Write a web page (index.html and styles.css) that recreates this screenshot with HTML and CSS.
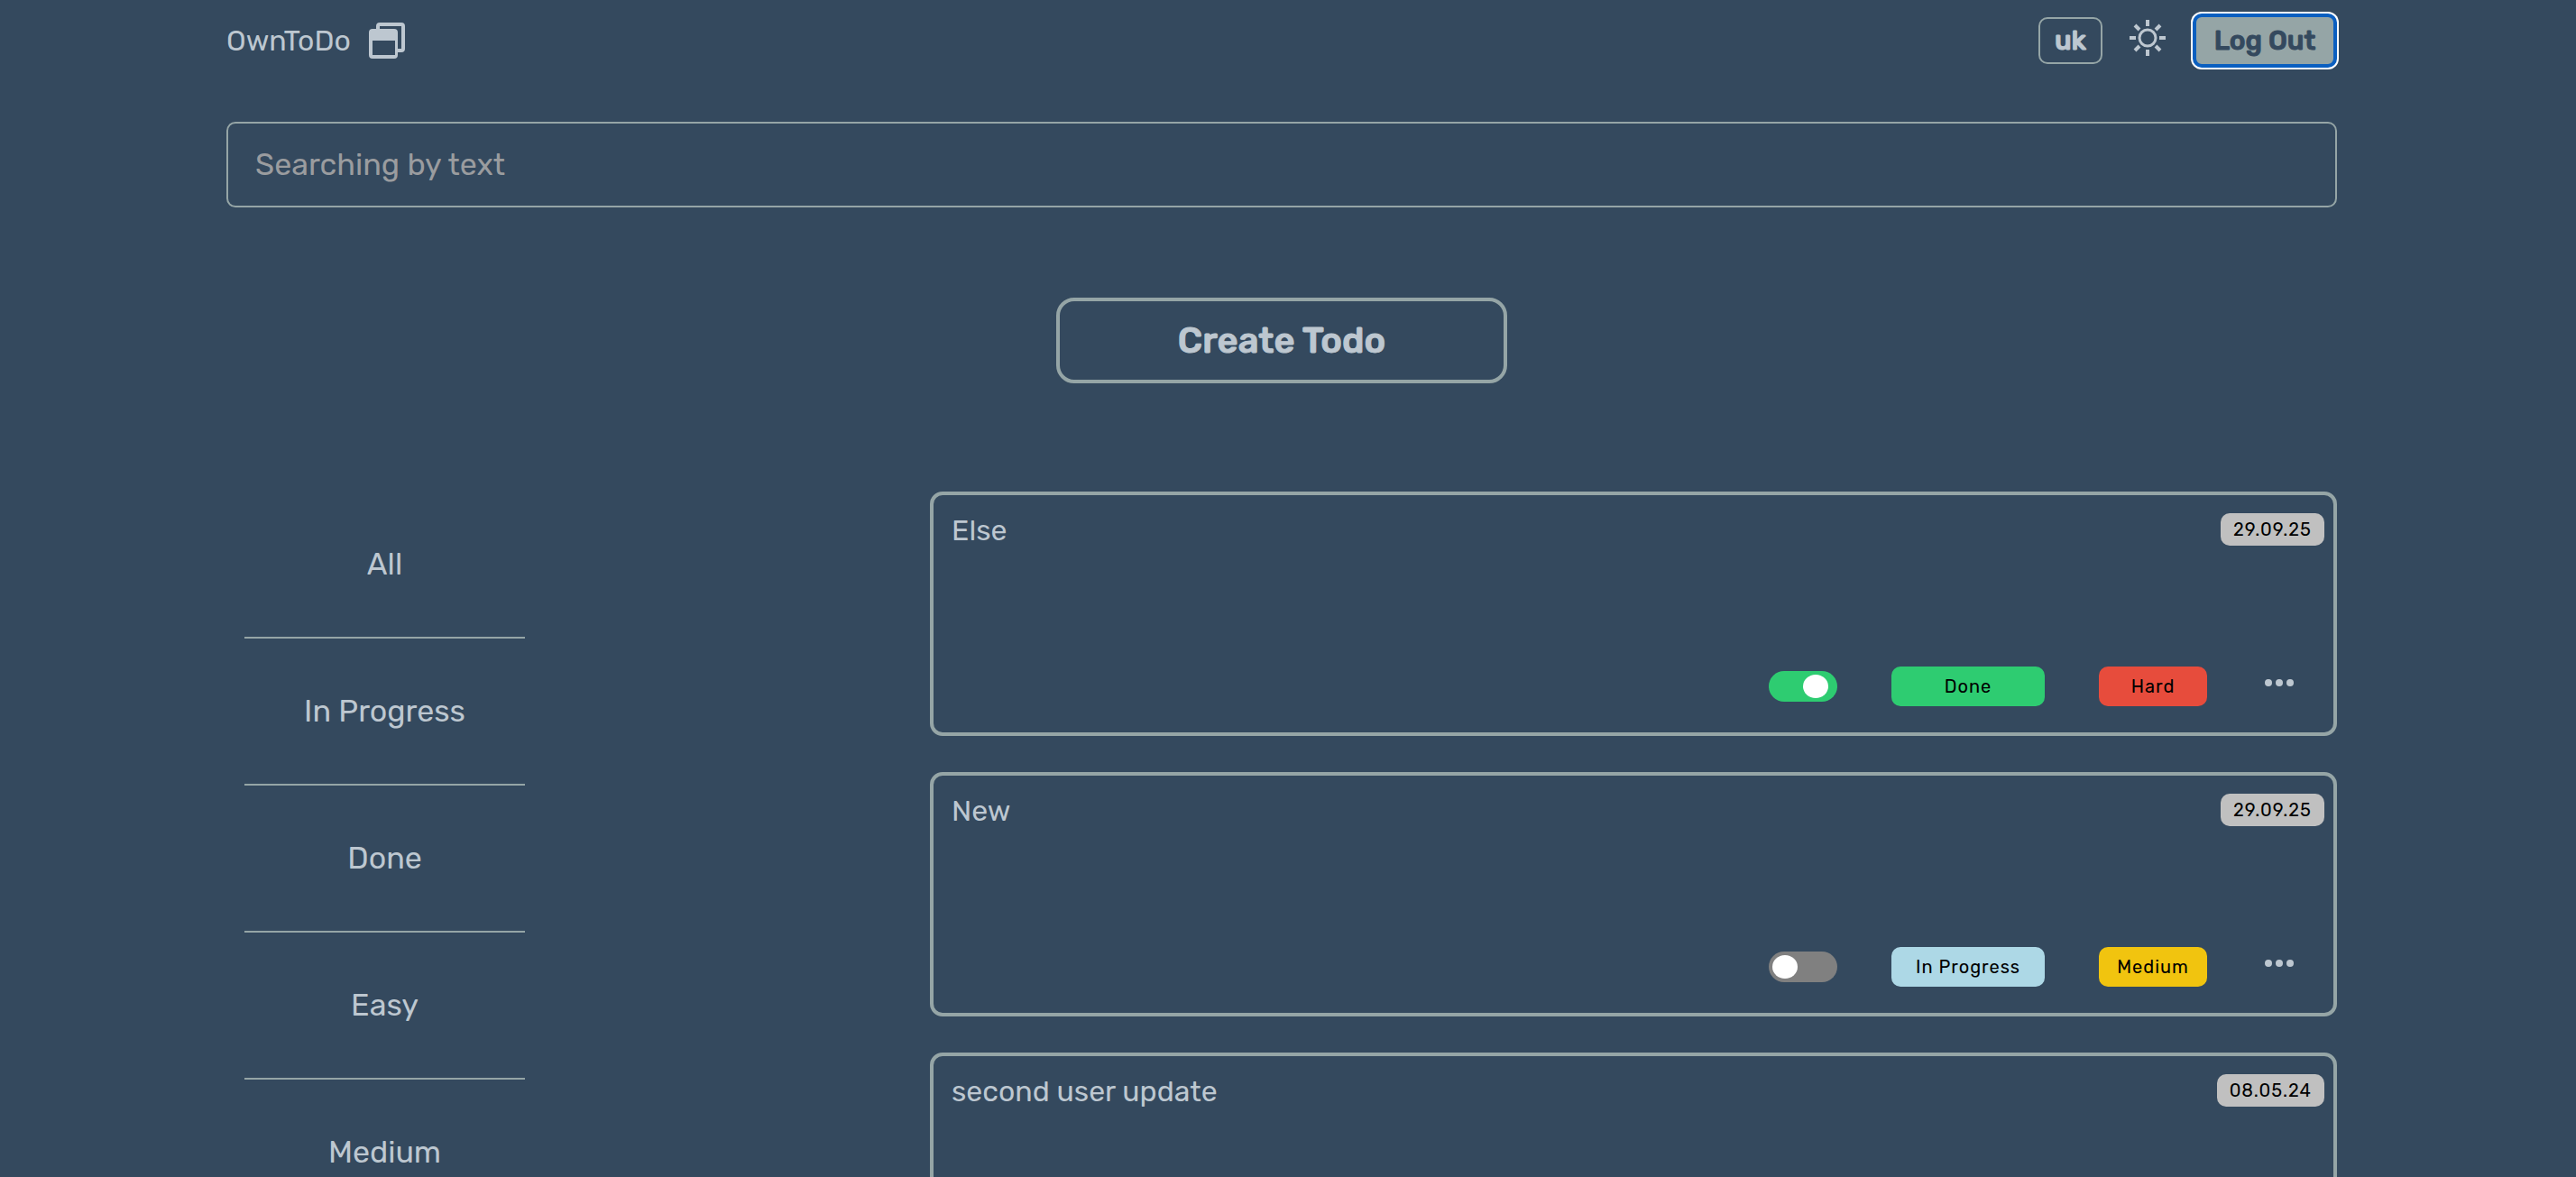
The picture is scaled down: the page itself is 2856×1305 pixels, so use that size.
FILE: index.html
```html
<!DOCTYPE html>
<html lang="en">
<head>
<meta charset="utf-8">
<meta name="viewport" content="width=device-width, initial-scale=1">
<title>OwnToDo</title>
<link rel="stylesheet" href="styles.css">
</head>
<body>
<div class="container">
  <header class="header">
    <a class="logo" href="#">
      <span>OwnToDo</span>
      <svg class="logo-icon" viewBox="0 0 40 40" aria-hidden="true">
        <path d="M10 7V4a2 2 0 0 1 2-2h24a2 2 0 0 1 2 2v25a2 2 0 0 1-2 2h-4" fill="none" stroke="currentColor" stroke-width="4"/>
        <path fill="currentColor" fill-rule="evenodd" d="M4 7h24a4 4 0 0 1 4 4v25a4 4 0 0 1-4 4H4a4 4 0 0 1-4-4V11a4 4 0 0 1 4-4zM4 20v16h25V20z"/>
      </svg>
    </a>
    <div class="actions">
      <button class="btn btn-lang" type="button">uk</button>
      <button class="btn-icon btn-theme" type="button" aria-label="Toggle theme">
        <svg viewBox="0 0 40 40" width="40" height="40" fill="none" stroke="currentColor" stroke-width="4" aria-hidden="true">
          <circle cx="20" cy="20" r="9" stroke-width="3"/>
          <path d="M20 0v7M20 33v7M0 20h7M33 20h7M6 6l5 5M29 29l5 5M34 6l-5 5M11 29l-5 5"/>
        </svg>
      </button>
      <button class="btn btn-logout" type="button">Log Out</button>
    </div>
  </header>

  <input class="search" type="text" placeholder="Searching by text" aria-label="Searching by text">

  <button class="create" type="button">Create Todo</button>

  <main class="content">
    <nav class="filters" aria-label="Filters">
      <button class="filter" type="button">All</button>
      <button class="filter" type="button">In Progress</button>
      <button class="filter" type="button">Done</button>
      <button class="filter" type="button">Easy</button>
      <button class="filter" type="button">Medium</button>
    </nav>

    <section class="todos">
      <article class="card">
        <div class="card-head">
          <h2 class="card-title">Else</h2>
          <time class="date">29.09.25</time>
        </div>
        <div class="card-foot">
          <input class="toggle" type="checkbox" aria-label="Else done" checked>
          <span class="tag tag-status done">Done</span>
          <span class="tag tag-level hard">Hard</span>
          <button class="btn-icon btn-more" type="button" aria-label="More">
            <svg viewBox="0 0 40 8" width="40" height="8" fill="currentColor" aria-hidden="true"><circle cx="8" cy="4" r="4"/><circle cx="20" cy="4" r="4"/><circle cx="32" cy="4" r="4"/></svg>
          </button>
        </div>
      </article>

      <article class="card">
        <div class="card-head">
          <h2 class="card-title">New</h2>
          <time class="date">29.09.25</time>
        </div>
        <div class="card-foot">
          <input class="toggle" type="checkbox" aria-label="New done">
          <span class="tag tag-status progress">In Progress</span>
          <span class="tag tag-level medium">Medium</span>
          <button class="btn-icon btn-more" type="button" aria-label="More">
            <svg viewBox="0 0 40 8" width="40" height="8" fill="currentColor" aria-hidden="true"><circle cx="8" cy="4" r="4"/><circle cx="20" cy="4" r="4"/><circle cx="32" cy="4" r="4"/></svg>
          </button>
        </div>
      </article>

      <article class="card">
        <div class="card-head">
          <h2 class="card-title">second user update</h2>
          <time class="date">08.05.24</time>
        </div>
      </article>
    </section>
  </main>
</div>
</body>
</html>
```

FILE: styles.css
```css
:root {
  --bg: #34495e;
  --text: #bdc7d0;
  --line: #95a5a6;
}

* {
  box-sizing: border-box;
}

html {
  scrollbar-width: none;
}

body {
  margin: 0;
  padding-right: 14px;
  background: var(--bg);
  color: var(--text);
  font-family: Rubik, Roboto, "Liberation Sans", sans-serif;
  font-size: 34px;
}

button,
input {
  font: inherit;
  color: inherit;
}

button {
  background: none;
  border: 0;
  padding: 0;
  cursor: pointer;
}

.container {
  max-width: 2340px;
  margin: 0 auto;
  display: flex;
  flex-direction: column;
}

.header {
  display: flex;
  justify-content: space-between;
  align-items: center;
  height: 90px;
}

.logo {
  display: flex;
  align-items: center;
  gap: 20px;
  color: inherit;
  font-size: 32px;
  text-decoration: none;
}

.logo-icon {
  width: 40px;
  height: 40px;
}

.actions {
  display: flex;
  align-items: center;
  gap: 30px;
}

.btn {
  font-size: 30px;
  font-weight: 500;
  -webkit-text-stroke: 1px currentColor;
  border-radius: 10px;
}

.btn-lang {
  width: 71px;
  height: 52px;
  border: 2px solid var(--line);
}

.btn-icon {
  display: flex;
}

.btn-theme {
  padding-bottom: 6px;
}

.btn-logout {
  width: 160px;
  height: 60px;
  background: var(--line);
  border: 4px solid #0b5fc0;
  box-shadow: 0 0 0 2px #fff;
  color: var(--bg);
}

.search {
  width: 100%;
  height: 95px;
  margin-top: 45px;
  padding: 0 30px;
  background: none;
  border: 2px solid var(--line);
  border-radius: 10px;
}

.search::placeholder {
  color: #9a9c9f;
  opacity: 1;
}

.create {
  align-self: center;
  width: 500px;
  height: 95px;
  margin-top: 100px;
  border: 4px solid var(--line);
  border-radius: 20px;
  font-size: 40px;
  font-weight: 500;
  -webkit-text-stroke: 1px currentColor;
}

.content {
  display: flex;
  justify-content: space-between;
  align-items: flex-start;
  margin-top: 120px;
}

.filters {
  width: 15%;
  padding: 0 20px;
  display: flex;
  flex-direction: column;
}

.filter {
  height: 163px;
  border-bottom: 2px solid var(--line);
}

.todos {
  width: 66.6667%;
  display: flex;
  flex-direction: column;
  gap: 40px;
}

.card {
  min-height: 271px;
  display: flex;
  flex-direction: column;
  justify-content: space-between;
  border: 4px solid var(--line);
  border-radius: 14px;
  padding-bottom: 29px;
}

.card-head {
  display: flex;
  justify-content: space-between;
  align-items: flex-start;
  padding: 20px 10px 0 20px;
}

.card-title {
  margin: 0;
  font-size: 32px;
  font-weight: 400;
  line-height: 38px;
}

.date {
  padding: 0 14px;
  border-radius: 10px;
  background: #c0c0c0;
  color: #000;
  font-size: 20px;
  line-height: 36px;
  letter-spacing: 1px;
}

.card-foot {
  display: flex;
  justify-content: flex-end;
  align-items: center;
  gap: 60px;
  padding-right: 40px;
}

.toggle {
  appearance: none;
  width: 76px;
  height: 34px;
  margin: 0;
  padding: 4px;
  border-radius: 17px;
  background: #808080;
}

.toggle::before {
  content: "";
  display: block;
  width: 28px;
  height: 26px;
  border-radius: 50%;
  background: #fff;
}

.toggle:checked {
  background: #2ecc71;
}

.toggle:checked::before {
  margin-left: 34px;
}

.tag {
  border-radius: 10px;
  color: #000;
  font-size: 20px;
  line-height: 44px;
  letter-spacing: 1px;
  text-align: center;
}

.tag-status {
  width: 170px;
}

.tag-level {
  width: 120px;
}

.done {
  background: #2ecc71;
}

.hard {
  background: #e74c3c;
}

.progress {
  background: #add8e6;
}

.medium {
  background: #f1c40f;
}

.btn-more {
  padding-bottom: 8px;
}
```
